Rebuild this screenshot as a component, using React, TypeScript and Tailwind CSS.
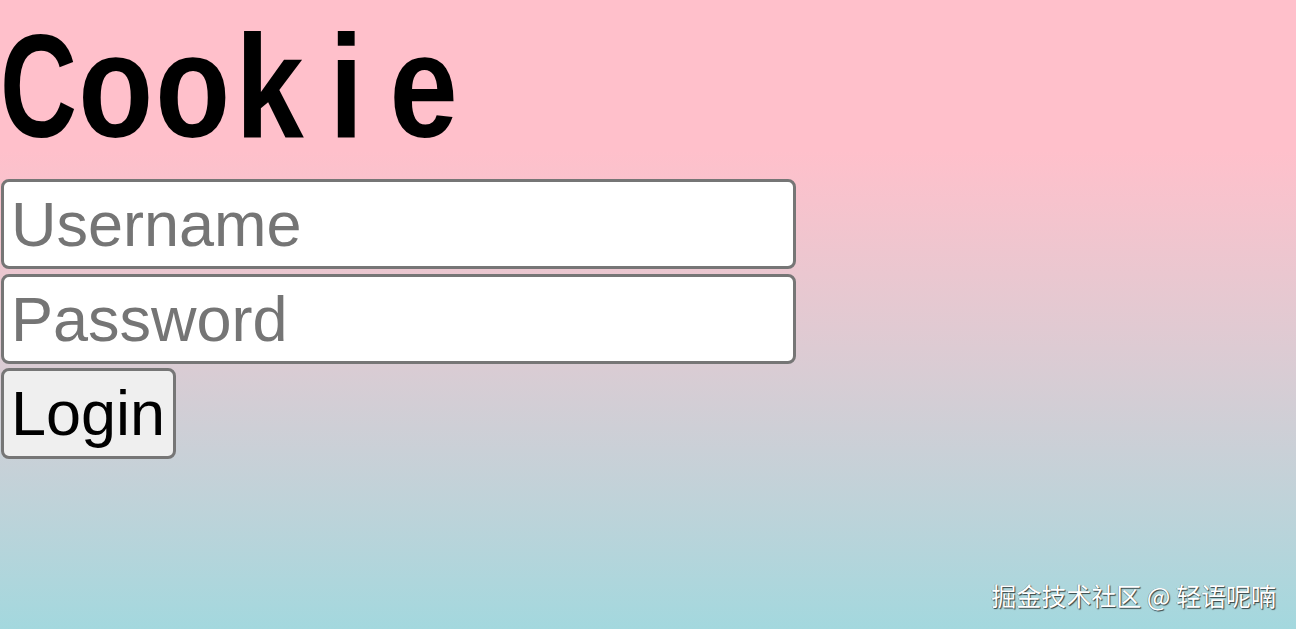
import React from "react";

const letters = ["C", "o", "o", "k", "i", "e"];

export default function App() {
  return (
    <div className="relative h-[629px] w-full overflow-hidden bg-gradient-to-b from-[#ffc0cb] from-[24%] to-[#a3d8de]">
      <h1
        className="m-0 flex h-[178px] text-[146px] font-bold leading-[174px] text-black"
        style={{ fontFamily: '"Liberation Sans", Arial, sans-serif' }}
      >
        {letters.map((l, i) =>
          i === 0 ? (
            <span key={i} className="flex w-[77px] shrink-0 justify-start">
              <span className="-mr-[40px] inline-block shrink-0 origin-left scale-x-[0.73]">{l}</span>
            </span>
          ) : (
            <span key={i} className="flex w-[77px] shrink-0 justify-center">
              <span className="inline-block shrink-0 scale-x-[0.84]">{l}</span>
            </span>
          )
        )}
      </h1>
      <div className="flex flex-col items-start pl-px" style={{ fontFamily: '"Liberation Sans", Arial, sans-serif' }}>
        <input
          type="text"
          placeholder="Username"
          className="mt-px box-border h-[90px] w-[795px] rounded-[8px] border-[3px] border-[#767676] bg-white px-[7px] text-[63px] text-black outline-none placeholder:text-[#757575]"
        />
        <input
          type="password"
          placeholder="Password"
          className="mt-[5px] box-border h-[90px] w-[795px] rounded-[8px] border-[3px] border-[#767676] bg-white px-[7px] text-[63px] text-black outline-none placeholder:text-[#757575]"
        />
        <button className="mt-[4px] box-border h-[91px] rounded-[8px] border-[3px] border-[#767676] bg-[#efefef] pl-[7px] pr-[8px] text-[63px] leading-none text-black">
          Login
        </button>
      </div>
      <div
        className="absolute bottom-[21px] right-[20px] text-[25px] leading-none text-white"
        style={{
          fontFamily: '"Noto Sans CJK SC", sans-serif',
          textShadow: "1px 1px 1px rgba(0,0,0,0.7), -0.5px -0.5px 0.5px rgba(0,0,0,0.4)",
        }}
      >
        掘金技术社区 @ 轻语呢喃
      </div>
    </div>
  );
}
